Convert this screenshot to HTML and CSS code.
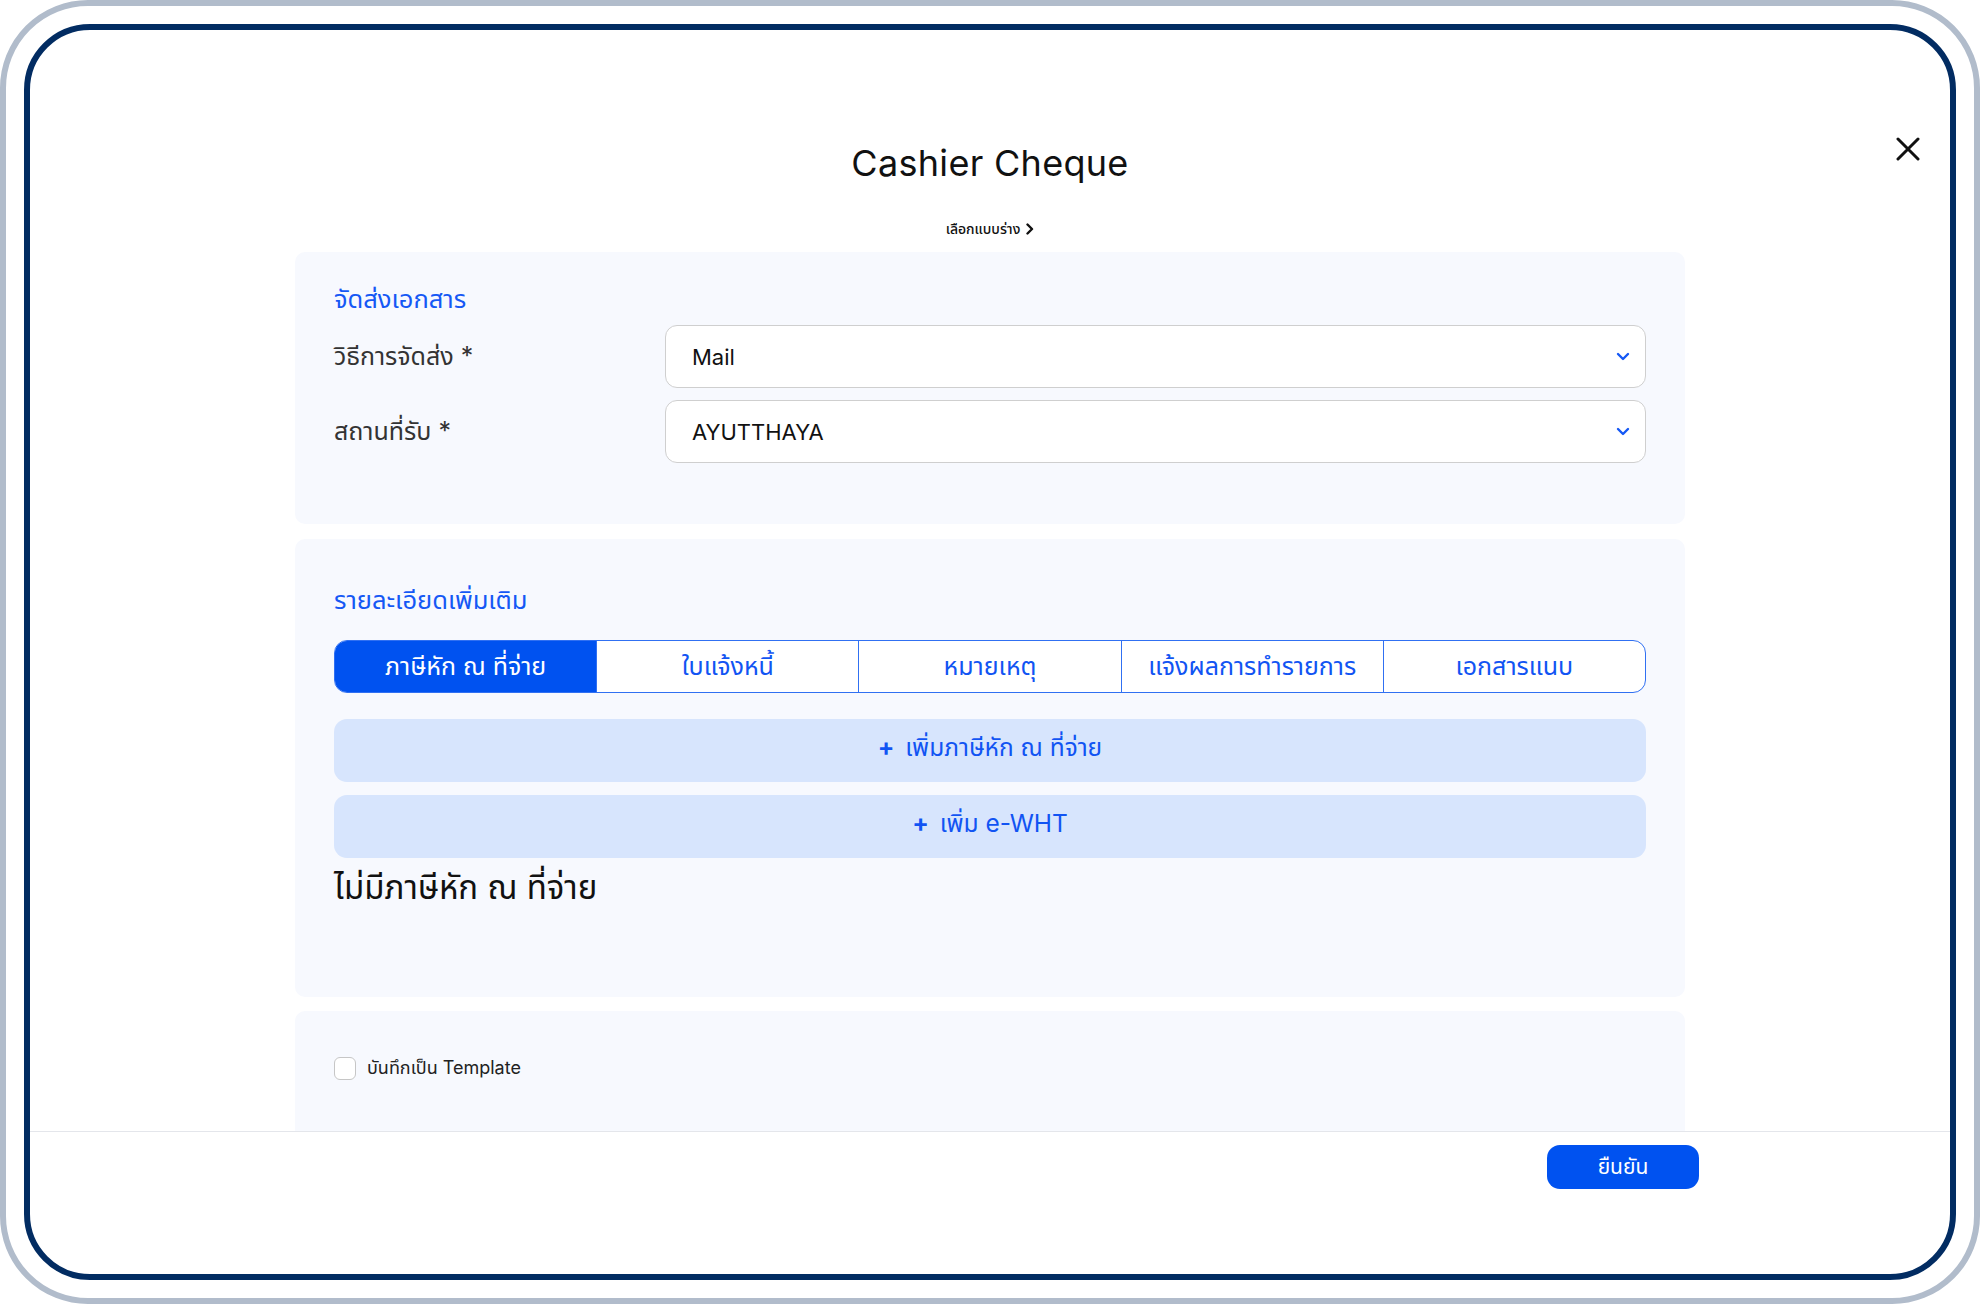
FILE: index.html
```html
<!DOCTYPE html>
<html lang="th">
<head>
    <meta charset="UTF-8">
    <meta name="viewport" content="width=device-width, initial-scale=1.0">
    <title>Cashier Cheque</title>
    <link rel="stylesheet" href="styles.css">
</head>
<body>
    <div class="frame">
        <div class="modal">
            <div class="modal-body">
                <button class="close-btn" aria-label="close">
                    <svg width="24" height="24" viewBox="0 0 24 24"><path d="M2 2L22 22M22 2L2 22" stroke="#111" stroke-width="3" stroke-linecap="round"/></svg>
                </button>

                <h1 class="title">Cashier Cheque</h1>
                <a href="#" class="draft-link">เลือกแบบร่าง
                    <svg width="8" height="12" viewBox="0 0 8 12"><path d="M1.5 1.5L6 6L1.5 10.5" fill="none" stroke="#111" stroke-width="2.4" stroke-linecap="round" stroke-linejoin="round"/></svg>
                </a>

                <div class="card card-delivery">
                    <h2 class="card-title">จัดส่งเอกสาร</h2>
                    <div class="field-row">
                        <label class="field-label">วิธีการจัดส่ง *</label>
                        <div class="select">
                            <span>Mail</span>
                            <svg class="chev" width="14" height="9" viewBox="0 0 14 9"><path d="M2 2L7 7L12 2" fill="none" stroke="#1558f5" stroke-width="2.4" stroke-linecap="round" stroke-linejoin="round"/></svg>
                        </div>
                    </div>
                    <div class="field-row">
                        <label class="field-label">สถานที่รับ *</label>
                        <div class="select">
                            <span>AYUTTHAYA</span>
                            <svg class="chev" width="14" height="9" viewBox="0 0 14 9"><path d="M2 2L7 7L12 2" fill="none" stroke="#1558f5" stroke-width="2.4" stroke-linecap="round" stroke-linejoin="round"/></svg>
                        </div>
                    </div>
                </div>

                <div class="card card-detail">
                    <h2 class="card-title">รายละเอียดเพิ่มเติม</h2>
                    <div class="tabs">
                        <div class="tab active">ภาษีหัก ณ ที่จ่าย</div>
                        <div class="tab">ใบแจ้งหนี้</div>
                        <div class="tab">หมายเหตุ</div>
                        <div class="tab">แจ้งผลการทำรายการ</div>
                        <div class="tab">เอกสารแนบ</div>
                    </div>
                    <button class="add-btn"><b>+</b> เพิ่มภาษีหัก ณ ที่จ่าย</button>
                    <button class="add-btn"><b>+</b> เพิ่ม e-WHT</button>
                    <p class="empty-text">ไม่มีภาษีหัก ณ ที่จ่าย</p>
                </div>

                <div class="card card-template">
                    <label class="check-row">
                        <span class="checkbox"></span>
                        <span>บันทึกเป็น Template</span>
                    </label>
                </div>
            </div>

            <div class="modal-footer">
                <button class="confirm-btn">ยืนยัน</button>
            </div>
        </div>
    </div>
</body>
</html>
```

FILE: styles.css
```css
* {
    box-sizing: border-box;
}
body {
    margin: 0;
    background: #fff;
    font-family: Inter, "Noto Sans Thai", "Noto Sans Thai UI", "Noto Sans Thai Looped", Loma, Garuda, sans-serif;
    color: #111;
}
.frame {
    width: 1980px;
    height: 1304px;
    border: 6px solid #b1bccb;
    border-radius: 88px;
    padding: 18px;
}
.modal {
    height: 100%;
    border: 6px solid #022c62;
    border-radius: 66px;
    display: flex;
    flex-direction: column;
    overflow: hidden;
}
.modal-body {
    position: relative;
    flex: 1;
    overflow: hidden;
    display: flex;
    flex-direction: column;
    align-items: center;
}
.close-btn {
    position: absolute;
    top: 107px;
    right: 30px;
    width: 24px;
    height: 24px;
    padding: 0;
    border: none;
    background: none;
    cursor: pointer;
}
.title {
    margin: 112px 0 0;
    font-size: 36px;
    line-height: 43px;
    font-weight: 400;
    letter-spacing: 0.3px;
}
.draft-link {
    margin-top: 34px;
    display: flex;
    align-items: center;
    gap: 6px;
    font-size: 14px;
    font-weight: 500;
    line-height: 20px;
    color: #111;
    text-decoration: none;
}
.card {
    width: 1390px;
    background: #f7f9fe;
    border-radius: 10px;
    padding: 0 39px;
    flex-shrink: 0;
}
.card-delivery {
    margin-top: 13px;
    padding-top: 29px;
    padding-bottom: 61px;
}
.card-title {
    margin: 0 0 8px;
    font-size: 25.5px;
    line-height: 36px;
    font-weight: 400;
    color: #1558f5;
}
.field-row {
    display: flex;
    align-items: center;
    margin-bottom: 12px;
}
.field-row:last-child {
    margin-bottom: 0;
}
.field-label {
    width: 331px;
    font-size: 25px;
    color: #333;
}
.select {
    flex: 1;
    height: 63px;
    background: #fff;
    border: 1.5px solid #cfcfcf;
    border-radius: 12px;
    padding: 0 15px 0 26px;
    display: flex;
    align-items: center;
    justify-content: space-between;
    font-size: 22px;
    color: #111;
}
.card-detail {
    margin-top: 15px;
    padding-top: 43px;
    padding-bottom: 88px;
}
.card-detail .card-title {
    margin-bottom: 22px;
}
.tabs {
    display: flex;
    height: 53px;
    border: 1.5px solid #3070f2;
    border-radius: 13px;
    overflow: hidden;
    background: #fff;
    margin-bottom: 26px;
}
.tab {
    flex: 1;
    display: flex;
    align-items: center;
    justify-content: center;
    font-size: 25px;
    color: #1154f3;
    border-left: 1.5px solid #3070f2;
}
.tab:first-child {
    border-left: none;
}
.tab.active {
    background: #0052f0;
    color: #fff;
}
.add-btn {
    display: block;
    width: 100%;
    height: 63px;
    margin-bottom: 13px;
    border: none;
    border-radius: 13px;
    background: #d7e5fd;
    color: #1154f3;
    font-family: inherit;
    font-size: 24.5px;
    padding: 0 0 4px;
    cursor: pointer;
}
.add-btn b {
    font-weight: 700;
    margin-right: 4px;
}
.empty-text {
    margin: -6px 0 0;
    font-size: 33px;
    line-height: 44px;
    color: #111;
}
.card-template {
    margin-top: 14px;
    padding-top: 44px;
    height: 160px;
    border-bottom-left-radius: 0;
    border-bottom-right-radius: 0;
}
.check-row {
    display: flex;
    align-items: center;
    gap: 11px;
    font-size: 18px;
    color: #222;
}
.checkbox {
    width: 22px;
    height: 23px;
    border: 1.5px solid #c6c6c6;
    border-radius: 6px;
    background: #fff;
}
.modal-footer {
    height: 143px;
    flex-shrink: 0;
    border-top: 1px solid #e4e6eb;
    display: flex;
    justify-content: flex-end;
    align-items: flex-start;
    padding: 13px 251px 0 0;
}
.confirm-btn {
    width: 152px;
    height: 44px;
    border: none;
    border-radius: 13px;
    background: #0052f0;
    color: #fff;
    font-family: inherit;
    font-size: 21px;
    cursor: pointer;
}
```
